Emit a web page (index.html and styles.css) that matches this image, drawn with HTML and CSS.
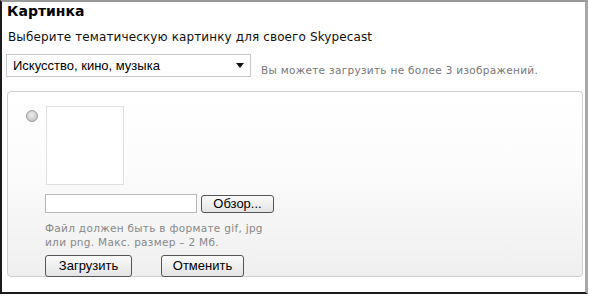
FILE: index.html
```html
<!DOCTYPE html>
<html lang="ru">
<head>
  <meta charset="UTF-8" />
  <title>Картинка</title>
  <link rel="stylesheet" href="styles.css">
</head>
<body>
  <div id="frame">
    <h2 class="title">Картинка</h2>
    <p class="lead">Выберите тематическую картинку для своего Skypecast</p>

    <div class="pick-row">
      <div class="select">
        <span>Искусство, кино, музыка</span>
        <span class="arrow"></span>
      </div>
      <span class="limit">Вы можете загрузить не более 3 изображений.</span>
    </div>

    <div class="panel">
      <div class="thumb-row">
        <span class="radio"></span>
        <div class="thumb"></div>
      </div>
      <div class="upload">
        <div class="file-row">
          <span class="file-field"></span>
          <button class="btn browse">Обзор...</button>
        </div>
        <p class="note">Файл должен быть в формате gif, jpg<br>или png. Макс. размер – 2 Мб.</p>
        <div class="btn-group">
          <button class="btn send">Загрузить</button>
          <button class="btn cancel">Отменить</button>
        </div>
      </div>
    </div>
  </div>
</body>
</html>
```

FILE: styles.css
```css
* {
  box-sizing: border-box;
}

body {
  margin: 0;
  background: #fff;
  font-family: "DejaVu Sans", Verdana, sans-serif;
}

#frame {
  width: 588px;
  height: 294px;
  border-left: 2px solid #1a1a1a;
  border-top: 2px solid #9a9a9a;
  border-right: 3px solid #a8a8a8;
  border-bottom: 2px solid #1a1a1a;
  padding: 0 0 0 5px;
}

.title {
  margin: 1px 0 0 0;
  font-size: 14px;
  font-weight: bold;
  color: #000;
  line-height: 17px;
}

.lead {
  margin: 9px 0 0 1px;
  font-size: 12px;
  letter-spacing: 0.12px;
  color: #111;
  line-height: 16px;
}

.pick-row {
  display: flex;
  align-items: center;
  margin-top: 9px;
  margin-left: -1px;
}

.select {
  width: 245px;
  height: 23px;
  border: 1px solid #c8c8c8;
  display: flex;
  align-items: center;
  justify-content: space-between;
  padding: 0 6px 0 6px;
  font-family: "Liberation Sans", Arial, sans-serif;
  font-size: 13px;
  color: #000;
}

.arrow {
  width: 0;
  height: 0;
  border-left: 4px solid transparent;
  border-right: 4px solid transparent;
  border-top: 5px solid #111;
}

.limit {
  margin-left: 10px;
  margin-top: 8px;
  font-size: 10.5px;
  letter-spacing: 0.3px;
  color: #777;
}

.panel {
  margin-top: 14px;
  width: 576px;
  height: 186px;
  border: 1px solid #cfcfcf;
  border-radius: 4px;
  background: linear-gradient(#fff 0%, #fcfcfc 40%, #efefef 100%);
  padding: 14px 0 0 18px;
}

.thumb-row {
  display: flex;
  align-items: flex-start;
}

.radio {
  width: 12px;
  height: 12px;
  margin-top: 4px;
  border-radius: 50%;
  border: 1px solid #9a9a9a;
  background: radial-gradient(circle at 45% 40%, #eee 0%, #c8c8c8 70%, #b0b0b0 100%);
}

.thumb {
  width: 78px;
  height: 79px;
  margin-left: 8px;
  border: 1px solid #e0e0e0;
  background: #fff;
}

.upload {
  margin-left: 19px;
  margin-top: 9px;
}

.file-row {
  display: flex;
  align-items: center;
  gap: 4px;
}

.file-field {
  display: block;
  width: 152px;
  height: 19px;
  border: 1px solid #b8b8b8;
  background: #fff;
}

.btn {
  font-family: "Liberation Sans", Arial, sans-serif;
  font-size: 13px;
  color: #000;
  border: 1px solid #555;
  border-radius: 3px;
  background: linear-gradient(#fafafa, #e4e4e4);
  padding: 0;
  line-height: 16px;
}

.browse {
  width: 73px;
  height: 18px;
}

.note {
  margin: 8px 0 0 0;
  font-size: 10.5px;
  letter-spacing: 0.3px;
  line-height: 14px;
  color: #888;
}

.btn-group {
  display: flex;
  gap: 29px;
  margin-top: 6px;
}

.send {
  width: 87px;
  height: 22px;
}

.cancel {
  width: 83px;
  height: 22px;
}
```
